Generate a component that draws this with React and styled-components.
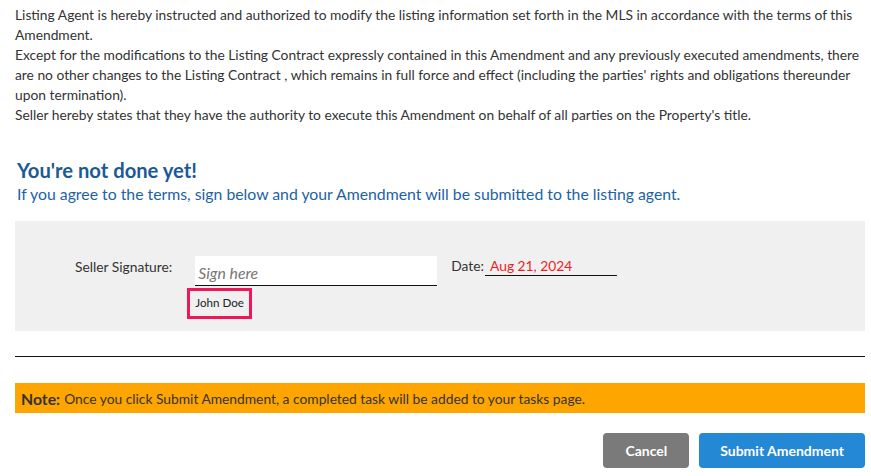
import styled, { createGlobalStyle } from 'styled-components';

const Global = createGlobalStyle`
  body {
    margin: 0;
    background: #fff;
    font-family: Lato, "Open Sans", sans-serif;
    color: #333;
  }
`;

const Page = styled.div`
  padding: 5px 6px 0 15px;
`;

const Terms = styled.div`
  font-size: 13.8px;
  line-height: 20px;
  color: #333;
`;

const Heading = styled.h2`
  margin: 32px 0 0 2px;
  font-size: 20.2px;
  font-weight: 700;
  color: #1b5a96;
  line-height: 26px;
`;

const Sub = styled.p`
  margin: 0 0 0 2px;
  font-size: 15.8px;
  line-height: 22px;
  color: #1d62a6;
`;

const SignPanel = styled.div`
  margin-top: 16px;
  background: #f0f0f0;
  height: 110px;
  box-sizing: border-box;
  padding: 35px 0 0 60px;
  display: flex;
  align-items: flex-start;
`;

const Label = styled.span`
  font-size: 13.8px;
  color: #333;
  line-height: 20px;
  margin-top: ${p => p.top || 0}px;
`;

const SignCol = styled.div`
  margin-left: 23px;
  display: flex;
  flex-direction: column;
  align-items: flex-start;
`;

const SignInput = styled.input`
  width: 242px;
  height: 30px;
  box-sizing: border-box;
  border: none;
  border-bottom: 1px solid #111;
  background: #fff;
  padding: 4px 3px 0;
  font-family: Lato, sans-serif;
  font-style: italic;
  font-size: 15.8px;
  outline: none;
  &::placeholder { color: #777; }
`;

const NameTag = styled.div`
  margin: 2px 0 0 -8px;
  border: 3px solid #f3155a;
  padding: 6px 5px 7px 5px;
  font-size: 11.6px;
  color: #222;
  line-height: 12px;
`;

const DateWrap = styled.div`
  margin-left: 14px;
  display: flex;
  align-items: flex-start;
`;

const DateValue = styled.span`
  margin-left: 1px;
  width: 132px;
  border-bottom: 1px solid #111;
  font-size: 13.8px;
  line-height: 19px;
  color: #f01c24;
  padding-left: 5px;
  box-sizing: border-box;
`;

const Rule = styled.hr`
  margin: 25px 0 0;
  border: none;
  border-top: 1px solid #111;
`;

const Note = styled.div`
  margin-top: 26px;
  background: #ffa500;
  height: 30px;
  display: flex;
  align-items: center;
  padding-left: 6px;
  font-size: 13.8px;
  color: #333;
  b { font-size: 15.8px; margin-right: 4px; }
`;

const Actions = styled.div`
  margin-top: 20px;
  display: flex;
  justify-content: flex-end;
  gap: 10px;
`;

const Btn = styled.button`
  height: 35px;
  border: none;
  border-radius: 4px;
  padding: 0 ${p => p.pad}px;
  background: ${p => p.bg};
  color: #fff;
  font-family: Lato, sans-serif;
  font-weight: 700;
  font-size: 14px;
  cursor: pointer;
`;

export default function App() {
  return (
    <Page>
      <Global />
      <Terms>
        Listing Agent is hereby instructed and authorized to modify the listing information set forth in the MLS in accordance with the terms of this Amendment.<br />
        Except for the modifications to the Listing Contract expressly contained in this Amendment and any previously executed amendments, there are no other changes to the Listing Contract , which remains in full force and effect (including the parties' rights and obligations thereunder upon termination).<br />
        Seller hereby states that they have the authority to execute this Amendment on behalf of all parties on the Property's title.
      </Terms>
      <Heading>You're not done yet!</Heading>
      <Sub>If you agree to the terms, sign below and your Amendment will be submitted to the listing agent.</Sub>
      <SignPanel>
        <Label top={1}>Seller Signature:</Label>
        <SignCol>
          <SignInput placeholder="Sign here" />
          <NameTag>John Doe</NameTag>
        </SignCol>
        <DateWrap>
          <Label>Date:</Label>
          <DateValue>Aug 21, 2024</DateValue>
        </DateWrap>
      </SignPanel>
      <Rule />
      <Note><b>Note:</b> Once you click Submit Amendment, a completed task will be added to your tasks page.</Note>
      <Actions>
        <Btn bg="#7a7a7a" pad={22}>Cancel</Btn>
        <Btn bg="#2488d4" pad={21}>Submit Amendment</Btn>
      </Actions>
    </Page>
  );
}
